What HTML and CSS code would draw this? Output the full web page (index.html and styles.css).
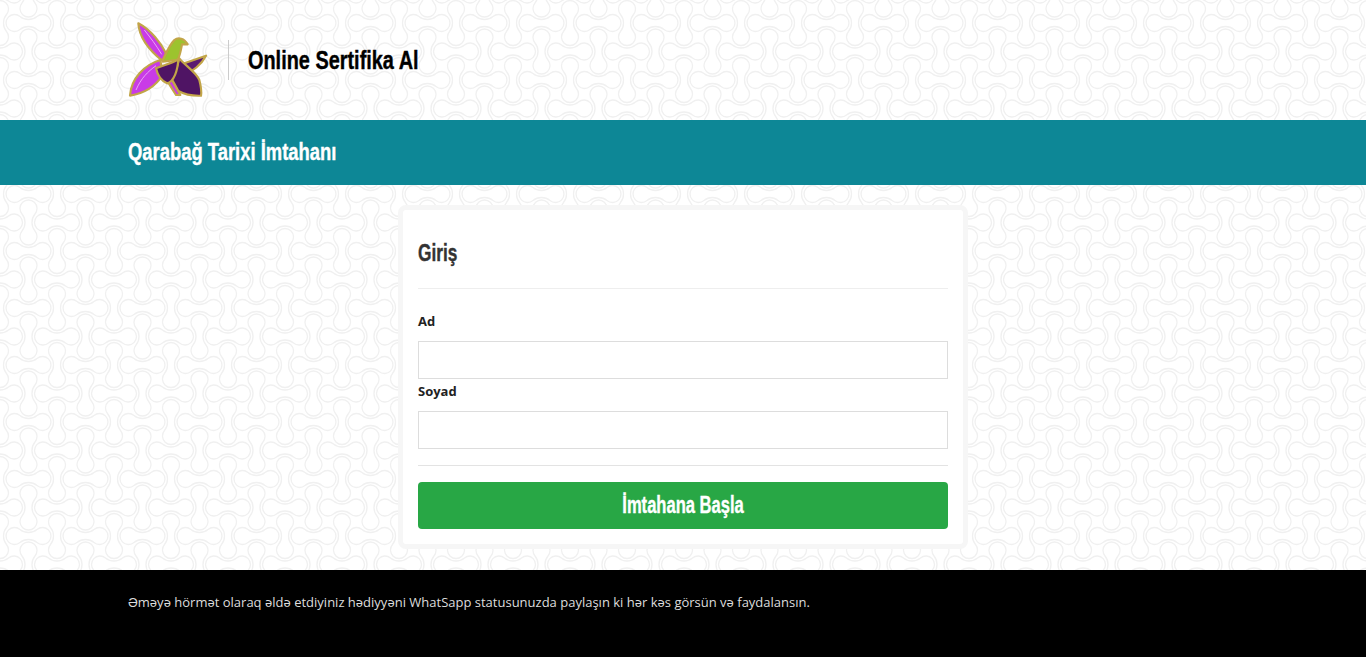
FILE: index.html
```html
<!DOCTYPE html>
<html lang="az">
<head>
    <meta charset="UTF-8">
    <meta name="viewport" content="width=device-width, initial-scale=1.0">
    <title>Online Sertifika Al</title>
    <link rel="stylesheet" href="styles.css">
</head>
<body>
    <!-- Logo row -->
    <header class="site-header">
        <div class="container header-row">
            <svg class="logo" viewBox="0 0 285 270" aria-label="Logo">
                <g stroke="#c2a548" stroke-width="6.5" stroke-linejoin="round">
                    <path fill="#c93be6" d="M52 25C90 45 120 85 135 115L125 138C90 110 55 70 52 25Z"/>
                    <path fill="#c93be6" d="M150 190L178 240L165 240L140 200Z"/>
                    <path fill="#c93be6" d="M118 135C70 150 30 190 27 242C70 235 105 212 125 180Z"/>
                    <path fill="#5a1a70" d="M190 145L255 122C240 150 215 170 195 172Z"/>
                    <path fill="#9cc32e" d="M125 135C135 115 145 90 160 75C172 66 190 70 200 88L183 88C180 105 175 125 170 135C155 135 135 140 125 140Z"/>
                    <path fill="#4f1464" d="M175 130C190 150 225 170 235 195C240 215 243 228 240 242C215 243 190 238 172 228C165 215 158 200 150 190C165 175 170 150 175 130Z"/>
                    <path fill="#4f1464" d="M105 160C125 150 150 148 172 132C170 165 160 200 138 205C122 198 110 182 105 160Z"/>
                </g>
                <path fill="none" stroke="#e9a6f5" stroke-width="3" d="M70 45C90 70 105 90 122 118M45 225C60 190 80 170 105 152"/>
            </svg>
            <div class="site-name"><span class="narrow narrow-name">Online Sertifika Al</span></div>
        </div>
    </header>

    <!-- Exam title bar -->
    <div class="title-bar">
        <div class="container">
            <h1 class="narrow narrow-title">Qarabağ Tarixi İmtahanı</h1>
        </div>
    </div>

    <!-- Login form -->
    <main class="content">
        <form class="card">
            <h2 class="narrow narrow-login">Giriş</h2>
            <hr class="rule rule-top">
            <label for="ad">Ad</label>
            <input type="text" id="ad">
            <label for="soyad" class="label-second">Soyad</label>
            <input type="text" id="soyad">
            <hr class="rule rule-bottom">
            <button type="button"><span class="narrow narrow-button">İmtahana Başla</span></button>
        </form>
    </main>

    <footer class="site-footer">
        <div class="container">
            <p>Əməyə hörmət olaraq əldə etdiyiniz hədiyyəni WhatSapp statusunuzda paylaşın ki hər kəs görsün və faydalansın.</p>
        </div>
    </footer>
</body>
</html>
```

FILE: styles.css
```css
* {
    box-sizing: border-box;
}

body {
    font-family: "Open Sans", Arial, sans-serif;
    margin: 0;
    min-height: 657px;
    display: flex;
    flex-direction: column;
    color: #222;
    background-color: #fff;
    background-position: 0 9px;
    background-image: url("data:image/svg+xml,%3Csvg xmlns='http://www.w3.org/2000/svg' width='57' height='57' viewBox='0 0 57 57'%3E%3Cdefs%3E%3Cpath id='a' d='M-8.5 -6.5A8.5 8.5 0 1 0 -8.5 6.5Q-5 3.5 0 3.5Q5 3.5 8.5 6.5A8.5 8.5 0 1 0 8.5 -6.5Q5 -3.5 0 -3.5Q-5 -3.5 -8.5 -6.5Z'/%3E%3C/defs%3E%3Cg fill='none' stroke='%23f0f0f0' stroke-width='1.3'%3E%3Cuse href='%23a' x='28.5' y='14'/%3E%3Cuse href='%23a' x='-28.5' y='14'/%3E%3Cuse href='%23a' x='85.5' y='14'/%3E%3Cuse href='%23a' x='0' y='42.5'/%3E%3Cuse href='%23a' x='57' y='42.5'/%3E%3Cuse href='%23a' transform='translate(28.5 42.5) rotate(90)'/%3E%3Cuse href='%23a' transform='translate(28.5 -14.5) rotate(90)'/%3E%3Cuse href='%23a' transform='translate(28.5 99.5) rotate(90)'/%3E%3Cuse href='%23a' transform='translate(0 14) rotate(90)'/%3E%3Cuse href='%23a' transform='translate(57 14) rotate(90)'/%3E%3Cuse href='%23a' transform='translate(0 71) rotate(90)'/%3E%3Cuse href='%23a' transform='translate(57 71) rotate(90)'/%3E%3C/g%3E%3C/svg%3E");
}

.container {
    width: 1140px;
    margin: 0 auto;
    padding: 0 15px;
}

.site-header {
    height: 120px;
}

.header-row {
    height: 100%;
    display: flex;
    align-items: center;
}

.logo {
    width: 95px;
    height: 90px;
    margin: 0 0 0 -7px;
    flex: none;
}

/* no condensed face installed, so the heading font is squeezed */
.narrow {
    display: inline-block;
    font-family: "Liberation Sans", Arial, sans-serif;
    font-weight: 700;
    transform-origin: left center;
    -webkit-text-stroke: 0.4px currentColor;
    white-space: nowrap;
}

.narrow-name {
    font-size: 26px;
    transform: scaleX(0.765);
}

.narrow-title {
    font-size: 24px;
    transform: scaleX(0.767);
}

.narrow-login {
    font-size: 24px;
    transform: scaleX(0.72);
}

.narrow-button {
    font-size: 24px;
    transform: scaleX(0.69);
    transform-origin: center center;
}

.site-name {
    color: #000;
    margin-left: 12px;
    padding-left: 19px;
    height: 40px;
    line-height: 40px;
    border-left: 1px solid #ccc;
}

.title-bar {
    height: 65px;
    padding-bottom: 2px;
    background-color: #0d8796;
    display: flex;
    align-items: center;
}

.title-bar h1 {
    color: #fff;
    margin: 0;
}

.content {
    height: 385px;
    padding-top: 20px;
}

.card {
    width: 570px;
    height: 344px;
    margin: 0 auto;
    padding: 0 15px;
    background-color: #fff;
    border: 5px solid #f6f6f6;
    border-radius: 8px;
}

.card h2 {
    line-height: 30px;
    color: #333;
    margin: 28px 0 0;
    display: block;
}

.rule {
    border: none;
    border-top: 1px solid #eee;
    margin: 0;
}

.rule-top {
    margin-top: 20px;
    margin-bottom: 22px;
}

.rule-bottom {
    margin-top: 16px;
    margin-bottom: 16px;
    border-top-color: #e3e3e3;
}

label {
    display: block;
    font-size: 13px;
    font-weight: 700;
    line-height: 20px;
    color: #222;
    margin-bottom: 10px;
}

.label-second {
    margin-top: 2px;
}

input {
    display: block;
    width: 100%;
    height: 38px;
    border: 1px solid #ddd;
    background-color: #fff;
}

button {
    display: block;
    width: 100%;
    height: 47px;
    padding: 0 0 2px;
    color: #fff;
    background-color: #28a745;
    border: none;
    border-radius: 4px;
    cursor: pointer;
}

.site-footer {
    height: 87px;
    background-color: #000;
    padding-top: 23px;
}

.site-footer p {
    font-size: 13px;
    line-height: 18px;
    color: #ddd;
    margin: 0;
}
```
